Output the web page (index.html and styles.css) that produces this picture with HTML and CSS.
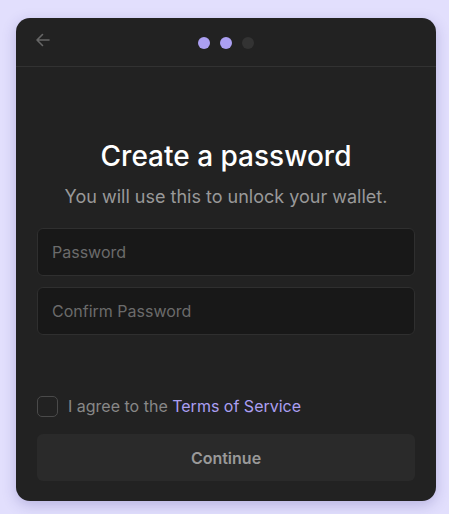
FILE: index.html
```html
<!DOCTYPE html>
<html>
<head>
<meta charset="utf-8">
<link rel="stylesheet" href="styles.css">
</head>
<body>
<div class="card">
  <div class="header">
    <button class="back" aria-label="Back">
      <svg width="16" height="16" viewBox="0 0 16 16" fill="none" stroke="#666" stroke-width="1.6" stroke-linecap="round" stroke-linejoin="round">
        <path d="M14 8H2M7.5 2.5L2 8l5.5 5.5"/>
      </svg>
    </button>
    <div class="dots">
      <span class="dot active"></span>
      <span class="dot active"></span>
      <span class="dot"></span>
    </div>
  </div>
  <div class="content">
    <h1 class="title">Create a password</h1>
    <p class="subtitle">You will use this to unlock your wallet.</p>
    <div class="fields">
      <input class="field" type="password" placeholder="Password">
      <input class="field" type="password" placeholder="Confirm Password">
    </div>
    <div class="spacer"></div>
    <label class="agree">
      <span class="checkbox"></span>
      <span>I agree to the <a class="link">Terms of Service</a></span>
    </label>
    <button class="continue">Continue</button>
  </div>
</div>
</body>
</html>
```

FILE: styles.css
```css
* { box-sizing: border-box; }
html, body { margin: 0; }
body {
  background: #e2dffd;
  padding: 18px 13px 0 16px;
  font-family: Inter, "Noto Sans", sans-serif;
  height: 514px;
  overflow: hidden;
}
.card {
  width: 420px;
  height: 483px;
  background: #222222;
  border-radius: 14px;
  box-shadow: 0 4px 14px rgba(60, 50, 140, 0.25);
  display: flex;
  flex-direction: column;
  overflow: hidden;
}
.header {
  height: 49px;
  border-bottom: 1px solid #323232;
  position: relative;
  display: flex;
  align-items: center;
  justify-content: center;
  flex-shrink: 0;
}
.back {
  position: absolute;
  left: 19px;
  top: 14px;
  background: none;
  border: 0;
  padding: 0;
  width: 16px;
  height: 16px;
  display: flex;
}
.dots {
  display: flex;
  gap: 10px;
  margin-top: 1px;
}
.dot {
  width: 12px;
  height: 12px;
  border-radius: 50%;
  background: #333333;
}
.dot.active { background: #ab9ff2; }
.content {
  flex: 1;
  display: flex;
  flex-direction: column;
  padding: 72px 21px 20px 21px;
}
.title {
  margin: 0;
  font-size: 28px;
  line-height: 34px;
  font-weight: 500;
  color: #ffffff;
  text-align: center;
}
.subtitle {
  margin: 12px 0 0 0;
  font-size: 18px;
  line-height: 24px;
  color: #999999;
  text-align: center;
}
.fields {
  margin-top: 19px;
  display: flex;
  flex-direction: column;
  gap: 11px;
}
.field {
  height: 48px;
  width: 100%;
  background: #181818;
  border: 1px solid #2f2f2f;
  border-radius: 6px;
  padding: 0 14px;
  font-family: inherit;
  font-size: 16px;
  color: #fff;
  outline: none;
}
.field::placeholder { color: #6b6b6b; }
.spacer { flex: 1; }
.agree {
  display: flex;
  align-items: center;
  gap: 10px;
  font-size: 16px;
  line-height: 21px;
  color: #888888;
}
.checkbox {
  width: 21px;
  height: 21px;
  border: 1px solid #4a4a4a;
  border-radius: 5px;
  flex-shrink: 0;
}
.link { color: #ab9ff2; }
.continue {
  margin-top: 17px;
  height: 47px;
  width: 100%;
  background: #2a2a2a;
  border: 0;
  border-radius: 6px;
  font-family: inherit;
  font-size: 16px;
  font-weight: 600;
  color: #999999;
}
```
